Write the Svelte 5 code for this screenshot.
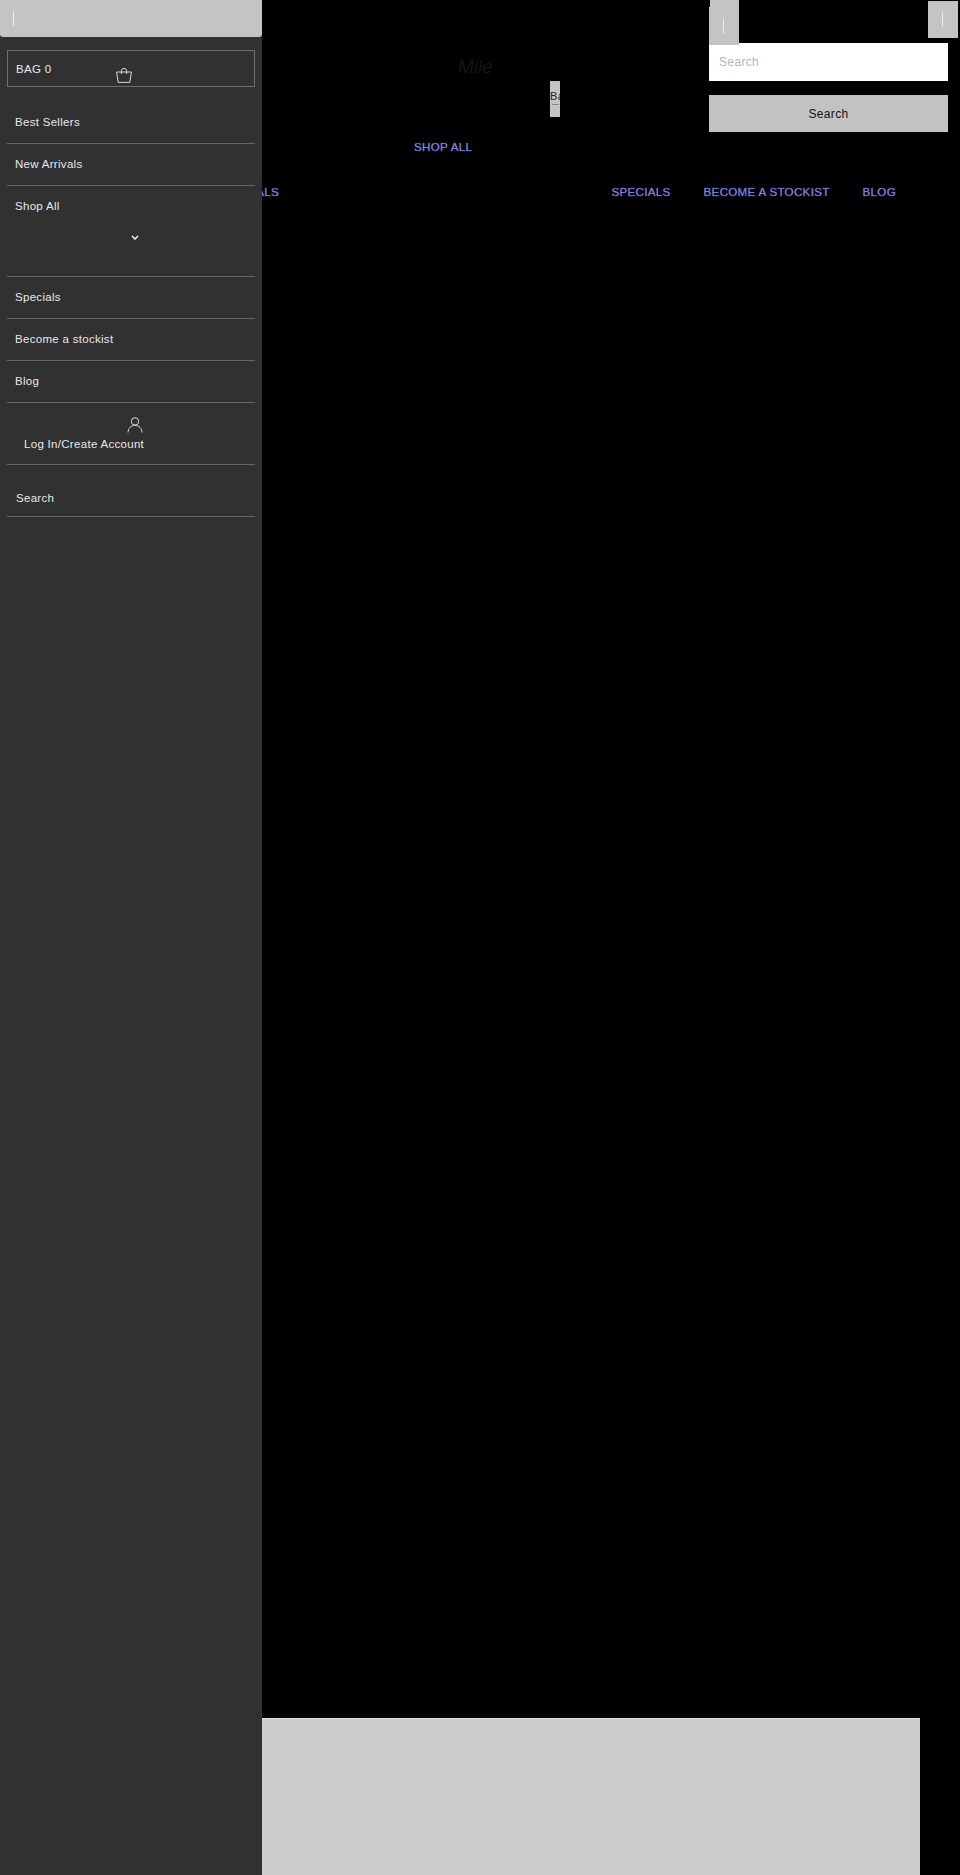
<script lang="ts">
	const mainNav = ['Specials', 'Become a stockist', 'Blog'];
	const drawerTop = ['Best Sellers', 'New Arrivals'];
	const drawerBottom = ['Specials', 'Become a stockist', 'Blog'];
</script>

<div class="page">
	<header class="header">
		<div class="top">
			<div class="logo-wrap"><span class="logo">Mile</span></div>
			<div class="mini-btn"><span class="mini-label">Bag</span><span class="mini-line"></span></div>
			<div class="search-col">
				<div class="toggles">
					<button class="toggle left" aria-label="Open"><span class="bar"></span></button>
					<button class="toggle right" aria-label="Close"><span class="bar"></span></button>
				</div>
				<input class="search-input" placeholder="Search" />
				<button class="search-btn">Search</button>
			</div>
		</div>
		<div class="shop-all"><a href="#top" class="nav-link">Shop All</a></div>
		<nav class="nav">
			<a href="#top" class="nav-link first">Specials</a>
			<div class="nav-right">
				{#each mainNav as item}
					<a href="#top" class="nav-link">{item}</a>
				{/each}
			</div>
		</nav>
	</header>
	<div class="hero"></div>
</div>

<aside class="drawer">
	<div class="drawer-head"><span class="bar"></span></div>
	<div class="bag">
		<span>BAG 0</span>
		<svg class="bag-icon" viewBox="0 0 16 15" width="16" height="15" fill="none" stroke="#d8d8d8" stroke-width="1">
			<path d="M0.6 4h14.8l-1.6 10.4H2.2z" />
			<path d="M5.4 6V2.8a2.6 2.4 0 0 1 5.2 0V6" />
		</svg>
	</div>
	<ul class="menu">
		{#each drawerTop as item}
			<li>{item}</li>
		{/each}
		<li class="has-sub">
			Shop All
			<svg class="chevron" viewBox="0 0 8 6" width="8" height="6" fill="none" stroke="#fff" stroke-width="1.3">
				<path d="M1 1l3 3 3-3" />
			</svg>
		</li>
		{#each drawerBottom as item}
			<li>{item}</li>
		{/each}
		<li class="account">
			<svg class="user-icon" viewBox="0 0 16 16" width="16" height="16" fill="none" stroke="#d8d8d8" stroke-width="1">
				<circle cx="8" cy="4.4" r="3.7" />
				<path d="M1 15.5c0-3.8 3-7.2 7-7.2s7 3.4 7 7.2" />
			</svg>
			<span>Log In/Create Account</span>
		</li>
		<li class="search-item">Search</li>
	</ul>
</aside>

<style>
	:global(body) {
		margin: 0;
		background: #000;
		font-family: 'Liberation Sans', Arial, sans-serif;
	}
	.page {
		width: 960px;
		height: 1875px;
		background: #000;
		display: flex;
		flex-direction: column;
		overflow: hidden;
	}
	.header {
		flex: 1;
		display: flex;
		flex-direction: column;
	}
	.top {
		display: flex;
		height: 132px;
		padding-left: 458px;
	}
	.logo-wrap {
		width: 92px;
		padding-top: 56px;
	}
	.logo {
		color: #151515;
		font-size: 19px;
		font-style: italic;
	}
	.mini-btn {
		width: 10px;
		height: 36px;
		margin-top: 81px;
		background: #c4c4c4;
		overflow: hidden;
		color: #222;
		font-size: 11px;
		letter-spacing: 0.5px;
		text-align: left;
		line-height: 13px;
		padding-top: 9px;
		box-sizing: border-box;
		flex-shrink: 0;
	}
	.mini-label {
		display: block;
		white-space: nowrap;
	}
	.mini-line {
		display: block;
		width: 7px;
		height: 1px;
		margin: 1px auto 0;
		background: #888;
	}
	.search-col {
		width: 239px;
		margin-left: 149px;
		display: flex;
		flex-direction: column;
		flex-shrink: 0;
	}
	.toggles {
		width: 249px;
		height: 43px;
		display: flex;
		justify-content: space-between;
		align-items: flex-start;
	}
	.toggle {
		border: none;
		padding: 0;
		background: #c4c4c4;
		display: flex;
		align-items: center;
		justify-content: center;
	}
	.toggle.left {
		width: 30px;
		height: 45px;
		padding: 7px 2px 0 0;
		position: relative;
		z-index: 1;
		background: linear-gradient(#c4c4c4, #c4c4c4) right top / 29px 100% no-repeat,
			linear-gradient(#c4c4c4, #c4c4c4) left 7px / 100% 38px no-repeat;
	}
	.toggle.right {
		width: 30px;
		height: 37px;
		margin-top: 1px;
		padding-right: 2px;
	}
	.bar {
		display: block;
		width: 1px;
		height: 15px;
		background: #ececec;
	}
	.search-input {
		box-sizing: border-box;
		height: 38px;
		width: 239px;
		border: none;
		padding: 0 10px;
		background: #fff;
		font: 12px 'Liberation Sans', Arial, sans-serif;
		letter-spacing: 0.35px;
		outline: none;
	}
	.search-input::placeholder {
		color: #b5b5b5;
	}
	.search-btn {
		box-sizing: border-box;
		height: 38px;
		width: 239px;
		margin-top: 14px;
		border: none;
		padding: 1px 0 0;
		background: #c2c2c2;
		color: #111;
		font: 12px 'Liberation Sans', Arial, sans-serif;
		letter-spacing: 0.35px;
	}
	.nav-link {
		color: #b5b5ee;
		font-size: 11.6px;
		letter-spacing: 0.3px;
		text-transform: uppercase;
		text-decoration: none;
		white-space: nowrap;
		-webkit-text-stroke: 0.4px #4a4ac0;
	}
	.shop-all {
		margin-top: 6px;
		padding-left: 414px;
		line-height: 16px;
	}
	.nav {
		margin-top: 29px;
		display: flex;
		justify-content: space-between;
		line-height: 16px;
		padding-left: 220px;
	}
	.nav-right {
		display: flex;
		gap: 33px;
		padding-right: 64px;
	}
	.hero {
		width: 658px;
		height: 157px;
		margin-left: 262px;
		background: #cdcdcd;
		border-top: 1px solid #e4e4e4;
		box-sizing: border-box;
		flex-shrink: 0;
	}
	.drawer {
		position: fixed;
		top: 0;
		left: 0;
		bottom: 0;
		width: 262px;
		background: #313131;
		color: #e8e8e8;
		font-size: 11.5px;
		letter-spacing: 0.3px;
		box-sizing: border-box;
	}
	.drawer-head {
		height: 37px;
		background: #c4c4c4;
		border-radius: 0 0 3px 3px;
		display: flex;
		align-items: center;
		padding-left: 13px;
	}
	.bag {
		position: relative;
		margin: 13px 7px 0;
		height: 37px;
		box-sizing: border-box;
		border: 1px solid #6e6e6e;
		padding: 11px 8px 0;
		line-height: 15px;
	}
	.bag-icon {
		position: absolute;
		left: 108px;
		top: 17px;
	}
	.menu {
		list-style: none;
		margin: 15px 7px 0;
		padding: 0;
	}
	.menu li {
		box-sizing: border-box;
		height: 42px;
		padding: 13px 8px 0;
		border-bottom: 1px solid #666;
		line-height: 15px;
	}
	.menu li.has-sub {
		height: 91px;
		position: relative;
	}
	.chevron {
		position: absolute;
		left: 124px;
		top: 49px;
	}
	.menu li.account {
		height: 62px;
		padding: 14px 0 0 17px;
		position: relative;
	}
	.user-icon {
		display: block;
		margin-left: 103px;
		margin-bottom: 4px;
	}
	.menu li.search-item {
		height: 52px;
		padding: 26px 0 0 9px;
	}
</style>
